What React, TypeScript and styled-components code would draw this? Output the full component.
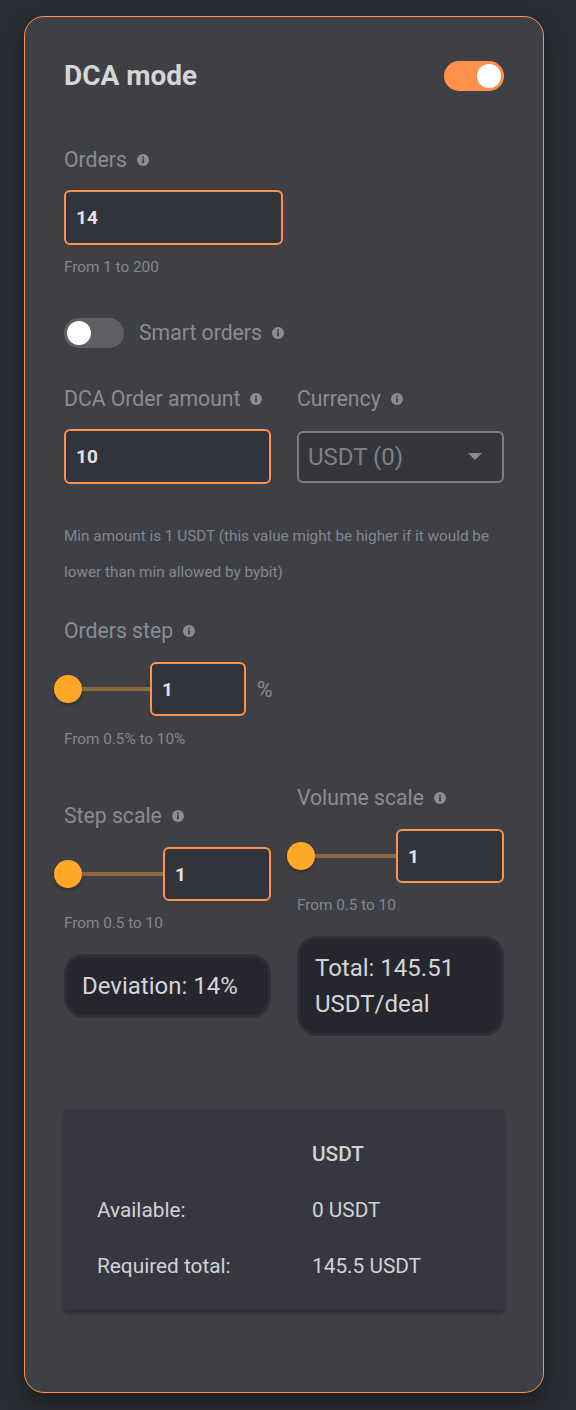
import React from 'react';
import styled, { createGlobalStyle } from 'styled-components';

const GlobalStyle = createGlobalStyle`
  html, body {
    margin: 0;
    padding: 0;
    background: #2b2d34;
    font-family: Roboto, "Liberation Sans", Arial, sans-serif;
  }
  * { box-sizing: border-box; }
`;

const Page = styled.div`
  padding: 16px 32px 18px 24px;
`;

const Card = styled.section`
  width: 520px;
  border: 1px solid #ff914d;
  border-radius: 20px;
  background: #3f4046;
  padding: 44px 39px 82px 39px;
  box-shadow: 0 10px 24px rgba(0, 0, 0, 0.35);
`;

const Header = styled.div`
  display: flex;
  align-items: center;
  justify-content: space-between;
  height: 30px;
`;

const Title = styled.h2`
  margin: 0;
  font-size: 28px;
  font-weight: 700;
  color: #d6d6d8;
  line-height: 30px;
`;

const Toggle = styled.span<{ $on?: boolean }>`
  position: relative;
  display: inline-block;
  flex: 0 0 auto;
  width: 60px;
  height: 30px;
  border-radius: 15px;
  background: ${p => (p.$on ? '#ff914d' : '#5f6066')};
  &::after {
    content: '';
    position: absolute;
    top: 3px;
    left: ${p => (p.$on ? '33px' : '3px')};
    width: 24px;
    height: 24px;
    border-radius: 50%;
    background: #ffffff;
  }
`;

const Block = styled.div<{ $mt: number }>`
  margin-top: ${p => p.$mt}px;
`;

const Label = styled.div`
  display: flex;
  align-items: center;
  gap: 10px;
  font-size: 21.2px;
  line-height: 22px;
  color: #8b8c91;
  white-space: nowrap;
`;

const Input = styled.div<{ $w?: number; $h?: number }>`
  display: flex;
  align-items: center;
  width: ${p => (p.$w ? `${p.$w}px` : '100%')};
  height: ${p => p.$h ?? 54}px;
  flex: 0 0 auto;
  padding-left: 10px;
  border: 2px solid #ff914d;
  border-radius: 6px;
  background: #32343c;
  color: #e2e2e4;
  font-size: 19px;
  font-weight: 700;
`;

const Select = styled.div`
  display: flex;
  align-items: center;
  justify-content: space-between;
  height: 52px;
  padding: 0 20px 0 9px;
  border: 2px solid #7d7e83;
  border-radius: 6px;
  background: #34363c;
  color: #7f8085;
  font-size: 24px;
`;

const Caret = styled.span`
  width: 0;
  height: 0;
  border-left: 7px solid transparent;
  border-right: 7px solid transparent;
  border-top: 7px solid #8b8c91;
`;

const Helper = styled.div<{ $lh?: number }>`
  font-size: 15.3px;
  line-height: ${p => p.$lh ?? 16}px;
  color: #85868b;
`;

const SmartRow = styled.div`
  display: flex;
  align-items: center;
  gap: 15px;
`;

const TwoCol = styled.div<{ $align?: string }>`
  display: grid;
  grid-template-columns: 1fr 1fr;
  column-gap: 26px;
  align-items: ${p => p.$align ?? 'start'};
`;

const Column = styled.div``;

const SliderRow = styled.div`
  display: flex;
  align-items: center;
`;

const Slider = styled.div<{ $w?: number }>`
  position: relative;
  height: 30px;
  ${p => (p.$w ? `flex: 0 0 ${p.$w}px;` : 'flex: 1;')}
`;

const Track = styled.span`
  position: absolute;
  left: 4px;
  right: 0;
  top: 13px;
  height: 4px;
  background: #8a6a3e;
`;

const Thumb = styled.span`
  position: absolute;
  left: -10px;
  top: 1px;
  width: 28px;
  height: 28px;
  border-radius: 50%;
  background: #ffa726;
  box-shadow: 0 2px 3px rgba(0, 0, 0, 0.3);
`;

const Unit = styled.span`
  margin-left: 11px;
  font-size: 21.2px;
  color: #8b8c91;
`;

const InfoBox = styled.div`
  border: 3px solid #2f3037;
  border-radius: 20px;
  background: #26272e;
  padding: 11px 15px;
  font-size: 24px;
  line-height: 36px;
  color: #d4d4d6;
`;

const Summary = styled.div`
  margin-top: 73px;
  border-radius: 4px;
  background: #363740;
  padding: 32px 20px 31px 33px;
  box-shadow: 0 3px 4px rgba(0, 0, 0, 0.3);
  display: grid;
  grid-template-columns: 215px 1fr;
  row-gap: 30px;
  font-size: 20.8px;
  line-height: 26px;
  color: #d2d2d4;
`;

const Head = styled.span`
  font-weight: 500;
`;

const Info = () => (
  <svg width="12" height="12" viewBox="0 0 12 12">
    <circle cx="6" cy="6" r="6" fill="#8b8c91" />
    <rect x="5.1" y="5" width="1.8" height="4.2" fill="#3f4046" />
    <rect x="5.1" y="2.6" width="1.8" height="1.6" fill="#3f4046" />
  </svg>
);

const Field = ({ text }: { text: string }) => (
  <Label>
    {text}
    <Info />
  </Label>
);

const ScaleSlider = ({ w }: { w?: number }) => (
  <Slider $w={w}>
    <Track />
    <Thumb />
  </Slider>
);

export default function App() {
  return (
    <Page>
      <GlobalStyle />
      <Card>
        <Header>
          <Title>DCA mode</Title>
          <Toggle $on />
        </Header>

        <Block $mt={58}>
          <Field text="Orders" />
        </Block>
        <Block $mt={19}>
          <Input $w={219} $h={55}>14</Input>
        </Block>
        <Block $mt={14}>
          <Helper>From 1 to 200</Helper>
        </Block>

        <Block $mt={43}>
          <SmartRow>
            <Toggle />
            <Field text="Smart orders" />
          </SmartRow>
        </Block>

        <Block $mt={40}>
          <TwoCol>
            <Field text="DCA Order amount" />
            <Field text="Currency" />
          </TwoCol>
        </Block>
        <Block $mt={19}>
          <TwoCol $align="center">
            <Input $h={55}>10</Input>
            <Select>
              USDT (0)
              <Caret />
            </Select>
          </TwoCol>
        </Block>
        <Block $mt={34}>
          <Helper $lh={36}>
            Min amount is 1 USDT (this value might be higher if it would be lower than min allowed by bybit)
          </Helper>
        </Block>

        <Block $mt={30}>
          <Field text="Orders step" />
        </Block>
        <Block $mt={20}>
          <SliderRow>
            <ScaleSlider w={86} />
            <Input $w={96}>1</Input>
            <Unit>%</Unit>
          </SliderRow>
        </Block>
        <Block $mt={15}>
          <Helper>From 0.5% to 10%</Helper>
        </Block>

        <Block $mt={40}>
          <TwoCol $align="center">
            <Column>
              <Field text="Step scale" />
              <Block $mt={20}>
                <SliderRow>
                  <ScaleSlider />
                  <Input $w={108}>1</Input>
                </SliderRow>
              </Block>
              <Block $mt={14}>
                <Helper>From 0.5 to 10</Helper>
              </Block>
              <Block $mt={23}>
                <InfoBox>Deviation: 14%</InfoBox>
              </Block>
            </Column>
            <Column>
              <Field text="Volume scale" />
              <Block $mt={20}>
                <SliderRow>
                  <ScaleSlider />
                  <Input $w={108}>1</Input>
                </SliderRow>
              </Block>
              <Block $mt={14}>
                <Helper>From 0.5 to 10</Helper>
              </Block>
              <Block $mt={23}>
                <InfoBox>Total: 145.51 USDT/deal</InfoBox>
              </Block>
            </Column>
          </TwoCol>
        </Block>

        <Summary>
          <span />
          <Head>USDT</Head>
          <span>Available:</span>
          <span>0 USDT</span>
          <span>Required total:</span>
          <span>145.5 USDT</span>
        </Summary>
      </Card>
    </Page>
  );
}
